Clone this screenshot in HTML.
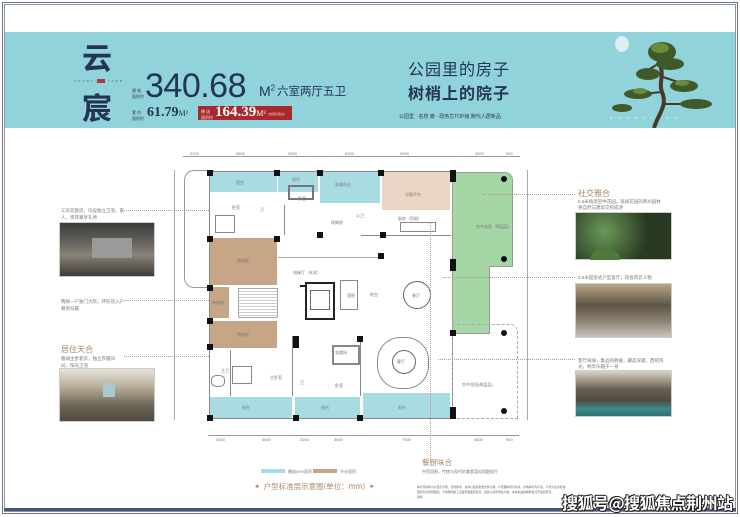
<!DOCTYPE html>
<html><head><meta charset="utf-8"><style>
*{margin:0;padding:0;box-sizing:border-box}
body{width:740px;height:517px;background:#fff;position:relative;overflow:hidden;font-family:"Liberation Sans","Noto Sans CJK SC",sans-serif}
.a{position:absolute}
.t{font-size:4px;color:#777;white-space:nowrap}
.blue{background:#a9dbe3}
.tan{background:#ead6c3}
.brn{background:#c7a688}
.col{position:absolute;width:6px;height:6px;background:#111}
</style></head><body>
<div class="a" style="left:2px;top:2px;width:736px;height:512px;border:1px solid #6a7690"></div>
<div class="a" style="left:4px;top:4px;width:732px;height:508px;border:1px solid #8b95aa"></div>
<div class="a" style="left:4px;top:508px;width:732px;height:3px;background:#4a5670"></div>
<!-- teal band -->
<div class="a" style="left:5px;top:32px;width:730px;height:96px;background:#90d3db"></div>
<div class="a" style="left:82px;top:38px;font-size:30px;font-weight:bold;color:#233553;font-family:'Noto Sans CJK SC',sans-serif;line-height:36px">云</div>
<div class="a" style="left:82px;top:88px;font-size:30px;font-weight:bold;color:#233553;font-family:'Noto Sans CJK SC',sans-serif;line-height:36px">宸</div>
<div class="a" style="left:74px;top:79px;font-size:3px;color:#556;letter-spacing:2px">COURT <span style="background:#b33;color:#b33">■■</span> YARD</div>
<div class="a t" style="left:132px;top:88px;color:#335">建 筑<br>面积约</div>
<div class="a" style="left:145px;top:68px;font-size:34px;color:#233553;line-height:36px;letter-spacing:-0.5px">340.68</div>
<div class="a" style="left:259px;top:83px;font-size:14px;color:#233553">M<sup style="font-size:8px">2</sup></div>
<div class="a" style="left:277px;top:84px;font-size:11.5px;color:#233553;font-family:'Noto Sans CJK SC',sans-serif;line-height:14px">六室两厅五卫</div>
<div class="a t" style="left:132px;top:110px;color:#335">套 内<br>面积约</div>
<div class="a" style="left:147px;top:105px;font-size:14px;color:#233553;font-family:'Liberation Serif',serif;font-weight:bold">61.79<span style="font-size:8px;font-weight:normal">M²</span></div>
<div class="a" style="left:198px;top:106px;width:94px;height:14px;background:#a8282e"></div>
<div class="a t" style="left:201px;top:109px;color:#fdd">赠 送<br>面积约</div>
<div class="a" style="left:215px;top:104px;font-size:15px;color:#fff;font-family:'Liberation Serif',serif;font-weight:bold">164.39<span style="font-size:8px;font-weight:normal">M²</span></div>
<div class="a t" style="left:268px;top:112px;color:#fcc;font-size:3px">(含送外露台)</div>
<div class="a" style="left:408px;top:58px;font-size:16px;color:#233553;font-family:'Noto Sans CJK SC',sans-serif;line-height:20px;letter-spacing:1px">公园里的房子</div>
<div class="a" style="left:408px;top:82px;font-size:16px;font-weight:bold;color:#233553;font-family:'Noto Sans CJK SC',sans-serif;line-height:20px;letter-spacing:1px">树梢上的院子</div>
<div class="a" style="left:399px;top:113px;font-size:5px;color:#334;white-space:nowrap">公园里 · 名校 旁 · 政务芯TOP级 跑代人居新品</div>
<div class="a" style="left:610px;top:116px;font-size:3px;color:#fff;letter-spacing:6px">COURTYARD</div>
<!-- tree -->
<svg class="a" style="left:608px;top:28px" width="120" height="100">
<ellipse cx="14" cy="16" rx="7" ry="8" fill="#e6f2f2" opacity=".9"/>
<path d="M46 100 C50 86 60 78 54 64 C50 54 58 46 50 34" stroke="#4a3828" stroke-width="4" fill="none"/>
<path d="M54 64 L34 66 M52 48 L76 56 M56 76 L78 76 M50 36 L40 42" stroke="#4a3828" stroke-width="2" fill="none"/>
<g fill="#3f5a28"><ellipse cx="54" cy="24" rx="14" ry="10"/><ellipse cx="62" cy="36" rx="14" ry="6"/><ellipse cx="40" cy="46" rx="12" ry="6"/><ellipse cx="76" cy="58" rx="14" ry="6"/><ellipse cx="30" cy="66" rx="14" ry="5"/><ellipse cx="88" cy="76" rx="16" ry="5"/><ellipse cx="14" cy="80" rx="10" ry="4"/></g>
<g fill="#6f8a3a"><ellipse cx="52" cy="20" rx="9" ry="5"/><ellipse cx="74" cy="55" rx="7" ry="3"/><ellipse cx="32" cy="63" rx="7" ry="3"/></g>
</svg>
<!-- plan dims -->
<div class="a" style="left:183px;top:156px;width:337px;height:1px;background:#999"></div>
<div class="a t" style="left:190px;top:151px">2100</div><div class="a t" style="left:236px;top:151px">5800</div><div class="a t" style="left:288px;top:151px">3500</div><div class="a t" style="left:345px;top:151px">5200</div><div class="a t" style="left:400px;top:151px">5900</div><div class="a t" style="left:475px;top:151px">4500</div><div class="a t" style="left:506px;top:151px">900</div>
<div class="a" style="left:208px;top:435px;width:311px;height:1px;background:#999"></div>
<div class="a t" style="left:216px;top:437px">2500</div><div class="a t" style="left:262px;top:437px">4600</div><div class="a t" style="left:300px;top:437px">2200</div><div class="a t" style="left:334px;top:437px">3600</div><div class="a t" style="left:402px;top:437px">7500</div><div class="a t" style="left:474px;top:437px">4500</div><div class="a t" style="left:506px;top:437px">900</div>
<div class="a" style="left:174px;top:170px;width:1px;height:250px;background:#aaa"></div>
<div class="a" style="left:527px;top:170px;width:1px;height:250px;background:#aaa"></div>
<!-- plan -->
<div class="a" style="left:184px;top:170px;width:30px;height:118px;border:1px solid #999;border-right:none;border-radius:10px 0 0 10px"></div>
<div class="a" style="left:209px;top:171px;width:244px;height:248px;border:1px solid #888"></div>
<div class="a blue" style="left:210px;top:172px;width:67px;height:20px"></div>
<div class="a blue" style="left:278px;top:172px;width:40px;height:20px"></div>
<div class="a blue" style="left:320px;top:172px;width:60px;height:31px"></div>
<div class="a tan" style="left:382px;top:172px;width:68px;height:38px"></div>
<div class="a" style="left:452px;top:172px;width:61px;height:95px;background:#a5d6a6;border:1px solid #999;border-radius:0 8px 0 0"></div>
<div class="a" style="left:452px;top:266px;width:38px;height:68px;background:#a5d6a6;border:1px solid #999;border-top:none"></div>
<div class="a" style="left:452px;top:324px;width:66px;height:95px;border:1px dashed #aaa;border-radius:0 8px 0 0"></div>
<div class="a brn" style="left:210px;top:238px;width:67px;height:47px"></div>
<div class="a brn" style="left:210px;top:287px;width:19px;height:31px"></div>
<div class="a brn" style="left:210px;top:321px;width:67px;height:27px"></div>
<div class="a blue" style="left:210px;top:397px;width:82px;height:21px"></div>
<div class="a blue" style="left:295px;top:397px;width:65px;height:21px"></div>
<div class="a blue" style="left:363px;top:393px;width:87px;height:25px"></div>
<div class="a" style="left:305px;top:282px;width:30px;height:38px;border:2px solid #222"></div>
<div class="a" style="left:300px;top:285px;width:5px;height:2px;background:#222"></div>
<div class="a" style="left:310px;top:290px;width:20px;height:20px;border:1px solid #666"></div>
<div class="a" style="left:238px;top:288px;width:40px;height:30px;border:1px solid #aaa;background:repeating-linear-gradient(#fff 0 2px,#ccc 2px 3px)"></div>
<div class="a" style="left:403px;top:281px;width:28px;height:28px;border:1px solid #666;border-radius:50%"></div>
<div class="a" style="left:377px;top:337px;width:52px;height:52px;border:1px solid #888;border-radius:45%"></div>
<div class="a" style="left:392px;top:350px;width:24px;height:24px;border:1px solid #666;border-radius:50%"></div>
<div class="a" style="left:340px;top:280px;width:18px;height:30px;border:1px solid #888"></div>
<div class="a" style="left:284px;top:205px;width:1px;height:30px;background:#888"></div>
<div class="a" style="left:215px;top:215px;width:20px;height:18px;border:1px solid #888"></div>
<div class="a" style="left:288px;top:185px;width:26px;height:15px;border:2px solid #777"></div>
<div class="a" style="left:332px;top:345px;width:28px;height:20px;border:2px solid #888"></div>
<div class="a" style="left:232px;top:366px;width:20px;height:18px;border:1px solid #888"></div>
<div class="a" style="left:211px;top:375px;width:14px;height:12px;border:1px solid #888;border-radius:40%"></div>
<div class="a" style="left:400px;top:222px;width:36px;height:10px;border:1px solid #888"></div>
<div class="a" style="top:257px;left:278px;width:105px;height:1px;background:#aaa"></div>
<div class="a" style="left:361px;top:235px;width:90px;height:1px;background:#888"></div>
<div class="a" style="left:292px;top:336px;width:1px;height:60px;background:#888"></div>
<div class="a" style="left:360px;top:336px;width:1px;height:60px;background:#888"></div>
<div class="a" style="left:230px;top:350px;width:1px;height:46px;background:#888"></div>
<!-- columns -->
<div class="col" style="left:207px;top:170px"></div><div class="col" style="left:274px;top:170px"></div><div class="col" style="left:317px;top:170px"></div><div class="col" style="left:378px;top:170px"></div><div class="col" style="left:450px;top:170px;height:12px"></div>
<div class="col" style="left:207px;top:236px"></div><div class="col" style="left:274px;top:236px"></div><div class="col" style="left:317px;top:232px"></div><div class="col" style="left:380px;top:232px"></div><div class="col" style="left:378px;top:253px"></div>
<div class="col" style="left:450px;top:259px;height:12px"></div><div class="col" style="left:207px;top:285px"></div><div class="col" style="left:207px;top:318px"></div><div class="col" style="left:207px;top:344px"></div>
<div class="col" style="left:293px;top:336px;height:12px"></div><div class="col" style="left:357px;top:336px"></div><div class="col" style="left:450px;top:330px"></div>
<div class="col" style="left:207px;top:415px"></div><div class="col" style="left:293px;top:415px"></div><div class="col" style="left:357px;top:415px"></div><div class="col" style="left:450px;top:407px;height:12px"></div>
<div class="col" style="left:501px;top:176px;border-radius:50%"></div><div class="col" style="left:501px;top:256px;border-radius:50%"></div><div class="col" style="left:501px;top:330px;border-radius:50%"></div><div class="col" style="left:501px;top:408px;border-radius:50%"></div>
<!-- labels -->
<div class="a t" style="left:236px;top:180px">阳台</div><div class="a t" style="left:292px;top:177px">阳台</div><div class="a t" style="left:335px;top:182px">家政阳台</div><div class="a t" style="left:405px;top:192px">设备平台</div>
<div class="a t" style="left:232px;top:205px">卧室</div><div class="a t" style="left:260px;top:207px">卫</div><div class="a t" style="left:298px;top:196px">卧室</div><div class="a t" style="left:331px;top:220px">保姆房</div><div class="a t" style="left:356px;top:213px">公卫</div><div class="a t" style="left:398px;top:216px">厨房（西厨）</div>
<div class="a t" style="left:476px;top:224px">空中花园（两层层）</div><div class="a t" style="left:237px;top:258px">结构板</div><div class="a t" style="left:293px;top:270px">电梯厅（玄关）</div>
<div class="a t" style="left:212px;top:300px">结构板</div><div class="a t" style="left:347px;top:293px">酒窖</div><div class="a t" style="left:370px;top:292px">吧台</div><div class="a t" style="left:412px;top:293px">餐厅</div>
<div class="a t" style="left:237px;top:332px">结构板</div><div class="a t" style="left:335px;top:350px">衣帽间</div><div class="a t" style="left:397px;top:359px">客厅</div>
<div class="a t" style="left:221px;top:368px">主卫</div><div class="a t" style="left:270px;top:375px">主卧室</div><div class="a t" style="left:300px;top:380px">卫</div><div class="a t" style="left:335px;top:383px">卧室</div><div class="a t" style="left:462px;top:382px">空中花园(两层层)</div>
<div class="a t" style="left:242px;top:405px">阳台</div><div class="a t" style="left:321px;top:405px">阳台</div><div class="a t" style="left:398px;top:405px">阳台</div>
<!-- leader lines -->
<div class="a" style="left:124px;top:210px;width:85px;border-top:1px dotted #b59a80"></div>
<div class="a" style="left:124px;top:300px;width:85px;border-top:1px dotted #b59a80"></div>
<div class="a" style="left:124px;top:356px;width:85px;border-top:1px dotted #b59a80"></div>
<div class="a" style="left:483px;top:194px;width:92px;border-top:1px dotted #b59a80"></div>
<div class="a" style="left:443px;top:277px;width:132px;border-top:1px dotted #b59a80"></div>
<div class="a" style="left:438px;top:359px;width:137px;border-top:1px dotted #b59a80"></div>
<div class="a" style="left:430px;top:222px;height:240px;border-left:1px dotted #b59a80"></div>
<!-- left texts/images -->
<div class="a t" style="left:61px;top:207px;font-size:4.5px;line-height:7px">三房双套房，均设独立卫浴，家<br>人，贵宾尊享礼待</div>
<div class="a" style="left:59px;top:222px;width:96px;height:55px;background:linear-gradient(180deg,#3c3c3c,#6a6660 40%,#8a8378 60%,#3e3a36);border:1px solid #ccc"></div>
<div class="a" style="left:92px;top:238px;width:40px;height:20px;background:#9a9a98"></div>
<div class="a t" style="left:61px;top:298px;font-size:4.5px;line-height:7px">两梯一户独门大院，环形双入户<br>尊崇归属</div>
<div class="a" style="left:61px;top:345px;font-size:8px;color:#a88663;font-family:'Noto Sans CJK SC',sans-serif;line-height:10px">居住天合</div>
<div class="a t" style="left:61px;top:355px;font-size:4.5px;line-height:7px">奢阔主卧套房，独立衣帽间<br>间，阳光卫浴</div>
<div class="a" style="left:59px;top:368px;width:96px;height:54px;background:linear-gradient(180deg,#e6e3dc,#b8ac98 35%,#6d6556 70%,#4f4a42);border:1px solid #ccc"></div>
<div class="a" style="left:103px;top:383px;width:12px;height:14px;background:#a8c9d1"></div>
<!-- right -->
<div class="a" style="left:578px;top:189px;font-size:8px;color:#a88663;font-family:'Noto Sans CJK SC',sans-serif;line-height:10px">社交雅合</div>
<div class="a t" style="left:578px;top:199px;font-size:4.5px;line-height:6px">6.6米挑高空中花园，宽阔花园的寄州园林<br>将自然与建筑交织成诗</div>
<div class="a" style="left:575px;top:212px;width:97px;height:48px;background:radial-gradient(circle at 30% 40%,#6a9a58,#2a3a22 60%),#2a3a22;border:1px solid #ccc"></div>
<div class="a" style="left:590px;top:250px;width:30px;height:10px;background:#4f7a3c;border-radius:10px 10px 0 0"></div>
<div class="a t" style="left:578px;top:275px;font-size:4.5px">3.6米超宽式户型宴厅，较会风云人物</div>
<div class="a" style="left:575px;top:283px;width:97px;height:55px;background:linear-gradient(180deg,#b8a585,#5f5648 40%,#8b8272 70%,#c8c4bc);border:1px solid #ccc"></div>
<div class="a t" style="left:578px;top:358px;font-size:4.5px;line-height:6px">客厅阔绰，集品的静谧，藏品深邃，西吧风<br>光，畅享乐趣于一身</div>
<div class="a" style="left:575px;top:370px;width:97px;height:47px;background:linear-gradient(180deg,#d9d4c8,#6a6050 40%,#4d4a40 65%,#3e8a8c 85%,#2f6f70);border:1px solid #ccc"></div>
<!-- bottom -->
<div class="a" style="left:261px;top:469px;width:24px;height:4px;background:#a7dbef"></div>
<div class="a t" style="left:288px;top:469px">赠送50%面积</div>
<div class="a" style="left:313px;top:469px;width:24px;height:4px;background:#c7a688"></div>
<div class="a t" style="left:340px;top:469px">不计面积</div>
<div class="a" style="left:254px;top:481px;font-size:7.5px;color:#b08a6a;white-space:nowrap;font-family:'Noto Sans CJK SC',sans-serif">✦&nbsp; 户型标准层示意图(单位：mm) &nbsp;✦</div>
<div class="a" style="left:422px;top:458px;font-size:7.5px;color:#a88663;font-family:'Noto Sans CJK SC',sans-serif;line-height:9px">餐厨味合</div>
<div class="a t" style="left:422px;top:469px;font-size:4px">中西双厨，传统与现代的美食蓝松相融相生</div>
<div class="a t" style="left:417px;top:485px;font-size:2.8px;line-height:5px;color:#666">本宣传资料为户型示意图，仅供参考，具体以政府批准文件为准。户型图中所示家具、家电等均为示意，不作为交房标准。<br>面积均为预测面积，不排除因施工误差导致面积变化，最终以实际测绘为准，本资料最终解释权归开发商所有。<br>资料</div>
<div class="a" style="left:562px;top:490px;font-size:16px;font-weight:bold;color:#fff;letter-spacing:-0.5px;white-space:nowrap;font-family:'Noto Sans CJK SC',sans-serif;text-shadow:1px 0 #222,-1px 0 #222,0 1px #222,0 -1px #222,1px 1px #222,-1px -1px #222">搜狐号@搜狐焦点荆州站</div>
</body></html>
